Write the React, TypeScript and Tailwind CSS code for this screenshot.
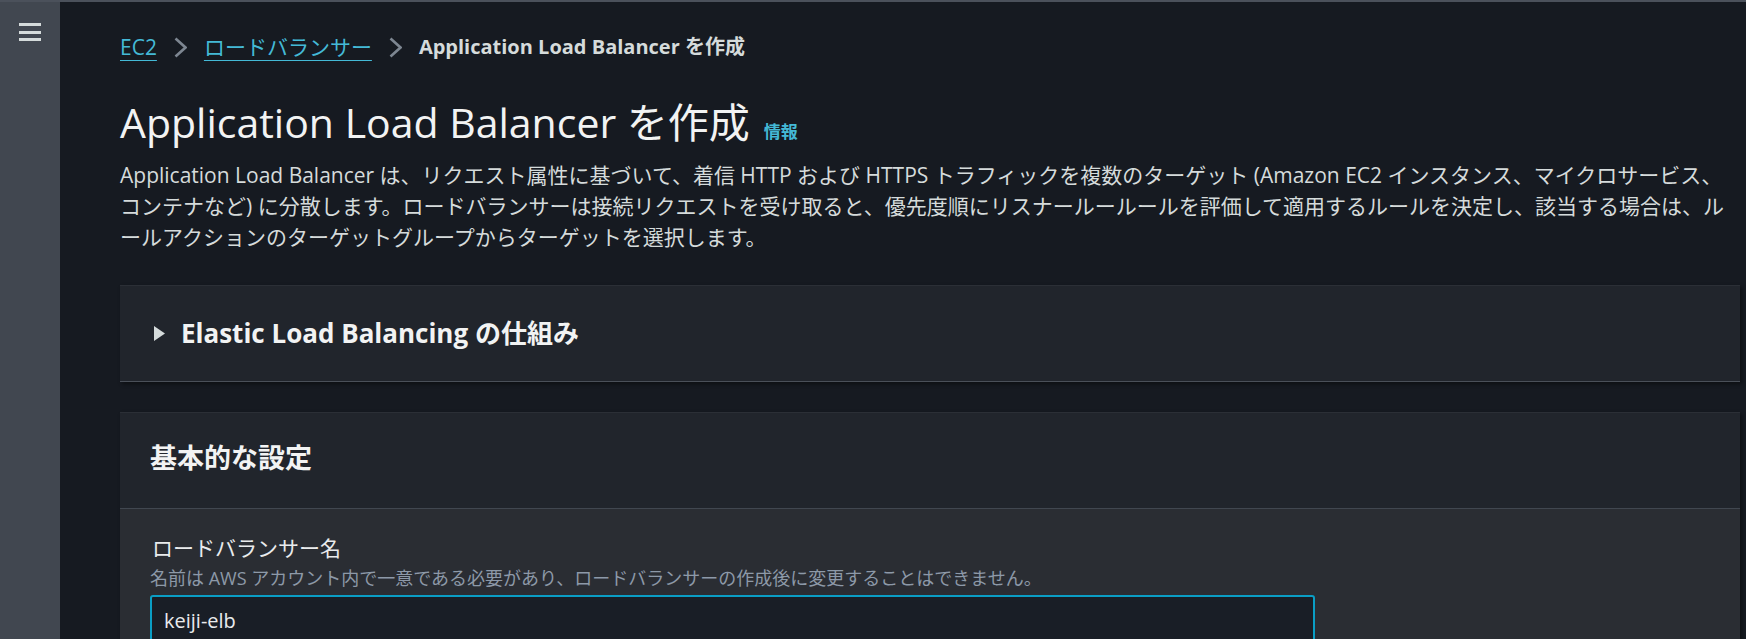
import { useState } from 'react';

function Chevron() {
  return (
    <svg width="13" height="21" viewBox="0 0 13 21" fill="none" className="shrink-0">
      <polyline points="1.5,1.5 11.5,10.5 1.5,19.5" stroke="#7d8691" strokeWidth="2.6" strokeLinejoin="miter" />
    </svg>
  );
}

function Hamburger() {
  return (
    <svg width="22" height="18" viewBox="0 0 22 18" fill="#d5dbdb">
      <rect x="0" y="0" width="22" height="3" />
      <rect x="0" y="8" width="22" height="3" />
      <rect x="0" y="15" width="22" height="3" />
    </svg>
  );
}

function Caret() {
  return (
    <svg width="11" height="15" viewBox="0 0 11 15" fill="#d5dbdb" className="shrink-0">
      <polygon points="0,0 11,7.5 0,15" />
    </svg>
  );
}

export default function App() {
  const [name, setName] = useState('keiji-elb');

  return (
    <div className="flex h-[639px] w-full overflow-hidden border-t-2 border-[#4b515b] bg-[#161a21] font-['Open_Sans','Noto_Sans_CJK_JP',sans-serif]">
      {/* side navigation */}
      <div className="w-[60px] shrink-0 bg-[#414750] pt-[21px] pl-[19px]">
        <Hamburger />
      </div>

      <div className="flex-1 pl-[60px]">
        <div className="w-[1620px]">
          {/* breadcrumb */}
          <nav className="mt-[31px] flex h-[28px] items-center gap-[17px] leading-[28px]">
            <a className="text-[21px] text-[#44b9d6] underline decoration-1 underline-offset-[5px]">EC2</a>
            <Chevron />
            <a className="text-[21px] text-[#44b9d6] underline decoration-1 underline-offset-[5px]">ロードバランサー</a>
            <Chevron />
            <span className="text-[20px] font-bold text-[#d5dbdb]">Application Load Balancer を作成</span>
          </nav>

          {/* page header */}
          <div className="mt-[36px] flex items-baseline gap-[14px]">
            <h1 className="text-[41px] leading-[50px] font-normal text-[#f2f3f3]">Application Load Balancer を作成</h1>
            <a className="text-[17px] font-bold text-[#44b9d6]">情報</a>
          </div>
          <p className="mt-[13px] text-[21px] leading-[31px] text-[#d5dbdb]">
            Application Load Balancer は、リクエスト属性に基づいて、着信 HTTP および HTTPS トラフィックを複数のターゲット (Amazon EC2 インスタンス、マイクロサービス、コンテナなど) に分散します。ロードバランサーは接続リクエストを受け取ると、優先度順にリスナールールールを評価して適用するルールを決定し、該当する場合は、ルールアクションのターゲットグループからターゲットを選択します。
          </p>

          {/* expandable section */}
          <div className="mt-[32px] flex h-[97px] items-center gap-[16px] border-t border-b border-t-[#2b2f36] border-b-[#4a5059] bg-[#21252c] pl-[34px] shadow-[2px_2px_4px_rgba(0,0,0,0.45)]">
            <Caret />
            <h2 className="text-[26px] font-bold text-[#f2f3f3]">Elastic Load Balancing の仕組み</h2>
          </div>

          {/* basic configuration */}
          <div className="mt-[30px] border-t border-[#2b2f36] bg-[#2a2d33] shadow-[2px_2px_4px_rgba(0,0,0,0.45)]">
            <div className="flex h-[96px] items-center border-b border-[#414750] bg-[#21252c] px-[30px] pb-[4px]">
              <h2 className="text-[27px] font-bold text-[#f2f3f3]">基本的な設定</h2>
            </div>
            <div className="px-[30px] pt-[25px] pb-[30px]">
              <label className="block pl-[2px] text-[21px] leading-[28px] text-[#e9ebed]">ロードバランサー名</label>
              <p className="mt-[4px] text-[18px] leading-[24px] text-[#8d99a8]">
                名前は AWS アカウント内で一意である必要があり、ロードバランサーの作成後に変更することはできません。
              </p>
              <input
                value={name}
                onChange={(e) => setName(e.target.value)}
                className="mt-[5px] h-[52px] w-[1165px] rounded-[3px] border-2 border-[#0a9ec5] bg-[#191e26] px-[12px] pb-[2px] text-[20px] text-[#e9ebed] outline-none"
              />
            </div>
          </div>
        </div>
      </div>
    </div>
  );
}
